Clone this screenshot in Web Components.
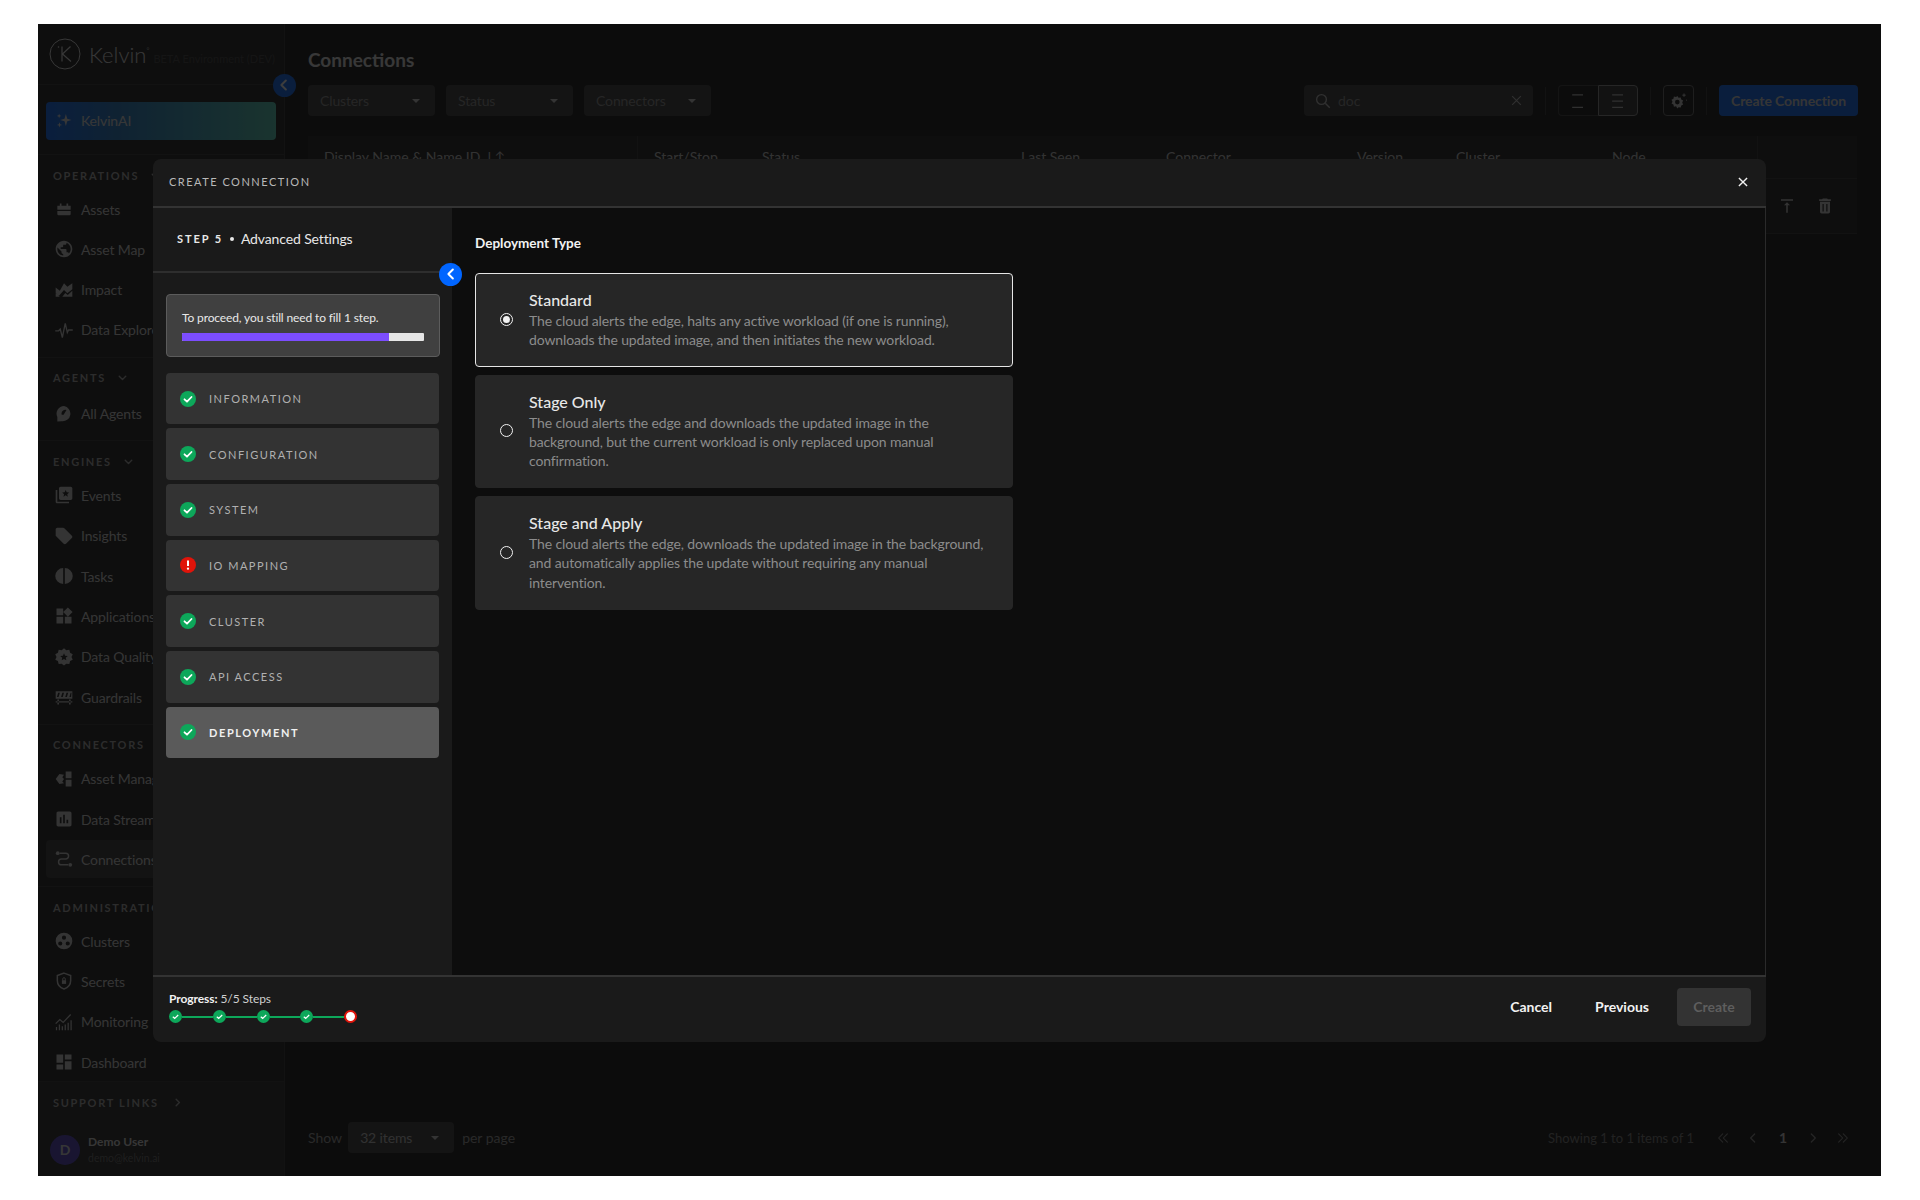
<!DOCTYPE html>
<html lang="en">
<head>
<meta charset="utf-8">
<title>Connections</title>
<style>
    html, body { margin: 0; height: 1200px; background: #fff; overflow: hidden; }
    body { font-family: "Lato", "Liberation Sans", sans-serif; }
</style>
</head>
<body>
<kelvin-app></kelvin-app>
<script>
const ICONS = {
    assets: 'M4 8h3V5.500h2V8h6V5.500h2V8h3v5H4zM4 14.500h16V18a1.500 1.500 0 0 1-1.500 1.500h-13A1.500 1.500 0 0 1 4 18z',
    globe: 'M12 2C6.480 2 2 6.480 2 12s4.480 10 10 10 10-4.480 10-10S17.520 2 12 2zm-1 17.930c-3.950-.490-7-3.850-7-7.930 0-.620.080-1.210.210-1.790L9 15v1c0 1.100.900 2 2 2v1.930zm6.900-2.540c-.260-.810-1-1.390-1.900-1.390h-1v-3c0-.550-.450-1-1-1H8v-2h2c.550 0 1-.450 1-1V7h2c1.100 0 2-.900 2-2v-.410c2.930 1.190 5 4.060 5 7.410 0 2.080-.800 3.970-2.100 5.390z',
    impact: 'M2 9l5 4 5-9 4 4 6-4v7l-6 5-4-4-6 7-4-3zM2 15.500L7 20H2zM22 13v7H10l3.500-4.500 3 2.500z',
    agents: 'M12 2.500a9 9 0 0 0-8 13.100V21l5-.400A9 9 0 1 0 12 2.500zm-3 9a4.500 4.500 0 0 1 6-4.200l-3.500 5.700L9.300 13a4.500 4.500 0 0 1-.300-1.500z',
    events: 'M4 6H2v14c0 1.100.900 2 2 2h14v-2H4zm16-4H8c-1.100 0-2 .900-2 2v12c0 1.100.900 2 2 2h12c1.100 0 2-.900 2-2V4c0-1.100-.900-2-2-2zm-3.400 12L14 12.400 11.400 14l.700-3L9.800 9l3-.300L14 6l1.200 2.700 3 .300-2.300 2z',
    tag: 'M21.410 11.580l-9-9C12.050 2.220 11.550 2 11 2H4c-1.100 0-2 .900-2 2v7c0 .550.220 1.050.590 1.420l9 9c.360.360.860.580 1.410.580.550 0 1.050-.220 1.410-.590l7-7c.370-.360.590-.860.590-1.410 0-.550-.230-1.060-.590-1.420z',
    tasks: 'M11 2.500a9.500 9.500 0 0 0 0 19zM13 2.500a9.500 9.500 0 0 1 0 19z',
    widgets: 'M13 13v8h8v-8h-8zM3 21h8v-8H3v8zM3 3v8h8V3H3zm13.660-1.310L11 7.340 16.660 13l5.660-5.660-5.660-5.650z',
    quality: 'M12 1.500l2.800 2.300 3.600-.400.900 3.500 3.200 1.700-1.500 3.300 1.500 3.300-3.200 1.700-.900 3.500-3.600-.400-2.800 2.300-2.800-2.300-3.600.400-.900-3.500-3.200-1.700 1.500-3.300L1.500 8.600l3.200-1.700.900-3.500 3.600.400zM12 7.500l-1.300 2.900-3.200.300 2.400 2.100-.700 3.100 2.800-1.600 2.800 1.600-.700-3.100 2.400-2.100-3.200-.300z',
    barrier: 'M2 5h20v9H2zM5 7L3.500 12h2L7 7zM10 7l-1.500 5h2L12 7zM15 7l-1.500 5h2L17 7zM20 7l-1.500 5h2L21 7zM4 15h2v6H4zM18 15h2v6h-2zM2 17h20v1.500H2z',
    manager: 'M14 3h7v8h-7zM14 13h7v8h-7zM2 12l4.500-6 5.500 1-2 3 2 2-2 3 2 2-5.500 1z',
    bars: 'M19 3H5c-1.100 0-2 .900-2 2v14c0 1.100.900 2 2 2h14c1.100 0 2-.900 2-2V5c0-1.100-.900-2-2-2zM9 17H7v-7h2v7zm4 0h-2V7h2v10zm4 0h-2v-4h2v4z',
    clusters: 'M12 2a10 10 0 1 0 0 20 10 10 0 0 0 0-20zM12 5.500a2.500 2.500 0 1 1 0 5 2.500 2.500 0 0 1 0-5zM7.500 12.500a2.500 2.500 0 1 1 0 5 2.500 2.500 0 0 1 0-5zM16.500 12.500a2.500 2.500 0 1 1 0 5 2.500 2.500 0 0 1 0-5z',
    dashboard: 'M3 13h8V3H3v10zm0 8h8v-6H3v6zm10 0h8V11h-8v10zm0-18v6h8V3h-8z',
    upload: 'M8 11h3v10h2V11h3l-4-4-4 4zM4 3v2h16V3H4z',
    trash: 'M6 19c0 1.100.900 2 2 2h8c1.100 0 2-.900 2-2V7H6v12zm3-9.500h1.500v9H9zm4.500 0H15v9h-1.500zM19 4h-3.500l-1-1h-5l-1 1H5v2h14V4z'
};

const STROKE_ICONS = {
    pulse: '<path d="M1.500 13h4l2-2 2.500 10 3.500-17 2.500 11 1.500-3h5" fill="none" stroke="currentColor" stroke-width="1.600"/>',
    route: '<circle cx="4.500" cy="5" r="2.300" fill="currentColor"/><circle cx="19.500" cy="19" r="2.300" fill="currentColor"/><path d="M7 5h7a3.500 3.500 0 0 1 0 7H9a3.500 3.500 0 0 0 0 7h8" fill="none" stroke="currentColor" stroke-width="1.800"/>',
    shield: '<path d="M12 2.500l8 3v6c0 5-3.400 8.600-8 10-4.600-1.400-8-5-8-10v-6z" fill="none" stroke="currentColor" stroke-width="1.800"/><path d="M9.500 11h5v4.500h-5z" fill="currentColor"/><path d="M10.500 11V9.500a1.500 1.500 0 0 1 3 0V11" fill="none" stroke="currentColor" stroke-width="1.200"/>',
    monitor: '<path d="M2 14l5-5 4 3.500L20 3" fill="none" stroke="currentColor" stroke-width="1.500"/><path d="M3 22v-4M6.500 22v-7M10 22v-5M13.500 22v-7M17 22v-9M20.500 22v-12" stroke="currentColor" stroke-width="1.500"/>'
};

function iconSvg(name, size) {
    const inner = STROKE_ICONS[name] || `<path d="${ICONS[name]}" fill="currentColor" fill-rule="evenodd"/>`;
    return `<svg viewBox="0 0 24 24" width="${size}" height="${size}" style="display:block;flex:none">${inner}</svg>`;
}

const chevron = (dir, size, color, width = 2.600) => {
    const d = {
        left: 'M14.500 6l-6 6 6 6',
        right: 'M9.500 6l6 6-6 6',
        down: 'M6 9.500l6 6 6-6',
        first: 'M11.500 5l-7 7 7 7M19.500 5l-7 7 7 7',
        last: 'M4.500 5l7 7-7 7M12.500 5l7 7-7 7'
    }[dir];
    return `<svg viewBox="0 0 24 24" width="${size}" height="${size}" style="display:block;flex:none"><path d="${d}" fill="none" stroke="${color}" stroke-width="${width}" stroke-linecap="round" stroke-linejoin="round"/></svg>`;
};

class NavItem extends HTMLElement {
    constructor() {
        super();
        this.attachShadow({ mode: 'open' });
    }

    connectedCallback() {
        const active = this.hasAttribute('active');
        this.shadowRoot.innerHTML = `
            <style>
                :host { display: block; }
                .item {
                    display: flex;
                    align-items: center;
                    gap: 7px;
                    height: 38px;
                    margin: 0 8px;
                    padding: 0 8px;
                    border-radius: 4px;
                    font-size: 14px;
                    letter-spacing: -.13px;
                    color: #d6d6d6;
                    white-space: nowrap;
                    background: ${active ? '#2e2e2e' : 'transparent'};
                }
                .glyph { color: #cfcfcf; }
            </style>
            <div class="item"><span class="glyph">${iconSvg(this.getAttribute('icon'), 20)}</span><slot></slot></div>
        `;
    }
}
customElements.define('nav-item', NavItem);

class NavSection extends HTMLElement {
    constructor() {
        super();
        this.attachShadow({ mode: 'open' });
    }

    connectedCallback() {
        const arrow = this.hasAttribute('open-arrow') ? chevron('down', 13, '#aaa') : '';
        this.shadowRoot.innerHTML = `
            <style>
                :host {
                    display: block;
                    padding: 10px 0 7.700px;
                    border-bottom: 1px solid #2a2a2a;
                }
                :host([last]) { border-bottom: 0; padding-bottom: 0; }
                .label {
                    display: flex;
                    align-items: center;
                    gap: 10px;
                    height: 20px;
                    margin: 0 15px ${this.getAttribute('gap') || 5}px;
                    font-size: 11px;
                    font-weight: 700;
                    letter-spacing: 1.700px;
                    color: #a9a9a9;
                    white-space: nowrap;
                }
                .list { display: flex; flex-direction: column; gap: 2.330px; }
            </style>
            <div class="label">${this.getAttribute('label')}${arrow}</div>
            <div class="list"><slot></slot></div>
        `;
    }
}
customElements.define('nav-section', NavSection);

class AppSidebar extends HTMLElement {
    constructor() {
        super();
        this.attachShadow({ mode: 'open' });
    }

    connectedCallback() {
        this.shadowRoot.innerHTML = `
            <style>
                :host {
                    display: flex;
                    flex-direction: column;
                    flex: none;
                    width: 247px;
                    height: 100%;
                    background: #151515;
                    border-right: 1px solid #2a2a2a;
                    box-sizing: border-box;
                    overflow: hidden;
                }
                .brand {
                    display: flex;
                    align-items: center;
                    gap: 8px;
                    height: 61px;
                    padding-left: 11px;
                    border-bottom: 1px solid #2a2a2a;
                    box-sizing: border-box;
                    flex: none;
                }
                .word { font-size: 22px; font-weight: 300; color: #e2e2e2; }
                .word sup { font-size: 7px; vertical-align: 10px; }
                .beta { font-size: 11px; color: #3a3a3a; margin: 8px 0 0 -4px; white-space: nowrap; }
                .ai-wrap {
                    flex: none;
                    height: 70px;
                    padding: 16.500px 8px 0;
                    box-sizing: border-box;
                    border-bottom: 1px solid #2a2a2a;
                }
                .ai {
                    display: flex;
                    align-items: center;
                    gap: 8px;
                    height: 38px;
                    padding: 0 9px 1px;
                    box-sizing: border-box;
                    border-radius: 4px;
                    font-size: 14px;
                    letter-spacing: -.13px;
                    color: #e2e2e2;
                    background: linear-gradient(90deg, #0065ff 0%, #1c78c8 30%, #4fd0b8 100%);
                }
                .nav { flex: none; }
                .support {
                    flex: none;
                    display: flex;
                    align-items: center;
                    gap: 12px;
                    height: 40px;
                    padding: 1px 0 0 15px;
                    box-sizing: border-box;
                    background: #1e1e1e;
                    border-top: 1px solid #2a2a2a;
                    font-size: 11px;
                    font-weight: 700;
                    letter-spacing: 1.700px;
                    color: #a9a9a9;
                    white-space: nowrap;
                }
                .user {
                    flex: 1;
                    display: flex;
                    align-items: center;
                    gap: 8px;
                    padding: 2px 0 0 12px;
                    background: #1e1e1e;
                }
                .avatar {
                    width: 30px;
                    height: 30px;
                    border-radius: 50%;
                    background: #4b3bc4;
                    color: #ddd;
                    display: flex;
                    align-items: center;
                    justify-content: center;
                    font-size: 14px;
                    font-weight: 700;
                }
                .name { font-size: 12px; font-weight: 700; color: #ddd; line-height: 16px; }
                .mail { font-size: 10.500px; color: #666; line-height: 16px; }
            </style>
            <div class="brand">
                <svg viewBox="0 0 32 32" width="32" height="32" style="flex:none">
                    <circle cx="16" cy="16" r="15" fill="none" stroke="#e2e2e2" stroke-width="1"/>
                    <path d="M13 8.500v15M21.500 8.500L13.500 16l8.500 7.500" fill="none" stroke="#e2e2e2" stroke-width="1.200"/>
                    <circle cx="9.500" cy="9" r=".8" fill="#e2e2e2"/>
                </svg>
                <span class="word">Kelvin<sup>°</sup></span>
                <span class="beta">BETA Environment (DEV)</span>
            </div>
            <div class="ai-wrap">
                <div class="ai">
                    <svg viewBox="0 0 24 24" width="18" height="18" style="flex:none"><path d="M14.500 4l1.800 6.200L22 12l-5.700 1.800L14.500 20l-1.800-6.200L7 12l5.700-1.800zM5.500 3.500l.8 2.200 2.200.8-2.200.8-.8 2.200-.8-2.200L2.500 6.500l2.200-.8zM6 15l.9 2.600 2.600.9-2.600.9L6 22l-.9-2.600-2.600-.9 2.600-.9z" fill="#e2e2e2"/></svg>
                    KelvinAI
                </div>
            </div>
            <div class="nav"><slot></slot></div>
            <div class="support">SUPPORT LINKS ${chevron('right', 13, '#aaa')}</div>
            <div class="user">
                <div class="avatar">D</div>
                <div>
                    <div class="name">Demo User</div>
                    <div class="mail">demo@kelvin.ai</div>
                </div>
            </div>
        `;
    }
}
customElements.define('app-sidebar', AppSidebar);

class FilterSelect extends HTMLElement {
    constructor() {
        super();
        this.attachShadow({ mode: 'open' });
    }

    connectedCallback() {
        this.shadowRoot.innerHTML = `
            <style>
                :host {
                    display: flex;
                    align-items: center;
                    justify-content: space-between;
                    width: ${this.getAttribute('width') || 127}px;
                    height: 31px;
                    padding: 0 15px 0 12px;
                    box-sizing: border-box;
                    background: #333;
                    border-radius: 4px;
                    font-size: 14px;
                    letter-spacing: -.13px;
                    color: ${this.getAttribute('ink') || '#8a8a8a'};
                    flex: none;
                }
                .caret { width: 0; height: 0; border: 4px solid transparent; border-top: 4px solid #cfcfcf; border-bottom: 0; }
            </style>
            <slot></slot><span class="caret"></span>
        `;
    }
}
customElements.define('filter-select', FilterSelect);

class ConnectionsView extends HTMLElement {
    constructor() {
        super();
        this.attachShadow({ mode: 'open' });
    }

    connectedCallback() {
        const heads = ['Display Name &amp; Name ID ↓↑', 'Start/Stop', 'Status', 'Last Seen', 'Connector', 'Version', 'Cluster', 'Node', ''];
        this.shadowRoot.innerHTML = `
            <style>
                :host {
                    display: flex;
                    flex-direction: column;
                    flex: 1;
                    min-width: 0;
                    height: 100%;
                    box-sizing: border-box;
                    padding: 0 23px 23px 23px;
                    background: #0d0d0d;
                }
                h1 {
                    margin: 0;
                    height: 61px;
                    padding-top: 23px;
                    box-sizing: border-box;
                    font-size: 19px;
                    font-weight: 700;
                    line-height: 25px;
                    color: #e4e4e4;
                }
                .toolbar { display: flex; align-items: center; gap: 11px; height: 31px; }
                .right { margin-left: auto; display: flex; align-items: center; gap: 12px; }
                .search {
                    display: flex;
                    align-items: center;
                    gap: 6px;
                    width: 229px;
                    height: 31px;
                    padding: 0 10px;
                    box-sizing: border-box;
                    background: #333;
                    border-radius: 4px;
                    font-size: 14px;
                    color: #8a8a8a;
                }
                .search span { flex: 1; }
                .sep { width: 1px; height: 28px; background: #2a2a2a; }
                .toggle { display: flex; width: 80px; height: 31px; }
                .toggle div {
                    flex: 1;
                    display: flex;
                    align-items: center;
                    justify-content: center;
                    border: 1px solid #333;
                    box-sizing: border-box;
                    color: #bdbdbd;
                }
                .toggle div:first-child { border-radius: 4px 0 0 4px; border-right: 0; }
                .toggle div:last-child { border-radius: 0 4px 4px 0; border-color: #8a8a8a; background: #2a2a2a; }
                .gear {
                    width: 31px;
                    height: 31px;
                    box-sizing: border-box;
                    border: 1px solid #666;
                    border-radius: 4px;
                    display: flex;
                    align-items: center;
                    justify-content: center;
                    color: #cfcfcf;
                }
                .create {
                    width: 139px;
                    height: 31px;
                    border-radius: 4px;
                    background: #0065ff;
                    color: #d8d8d8;
                    font-size: 14px;
                    font-weight: 700;
                    letter-spacing: -.1px;
                    display: flex;
                    align-items: center;
                    justify-content: center;
                }
                .table { margin-top: 20px; width: 1549px; }
                .head, .row {
                    display: grid;
                    grid-template-columns: 330px 108px 259px 145px 191px 99px 156px 161px 100px;
                    background: #181818;
                    border-bottom: 1px solid #2a2a2a;
                }
                .head { height: 42px; }
                .head div {
                    padding: 11px 0 0 16px;
                    font-size: 14px;
                    line-height: 20px;
                    color: #c8c8c8;
                    white-space: nowrap;
                    box-sizing: border-box;
                }
                .head div:first-child { border-right: 1px solid #2a2a2a; }
                .head div:last-child { border-left: 1px solid #2a2a2a; }
                .row { height: 54px; }
                .actions { grid-column: 9; display: flex; align-items: center; gap: 19px; padding-left: 21px; color: #cfcfcf; }
                .pager {
                    margin-top: auto;
                    display: flex;
                    align-items: center;
                    height: 31px;
                    font-size: 14px;
                    color: #9a9a9a;
                }
                .count { margin-left: auto; display: flex; align-items: center; }
                .total { font-size: 13px; color: #7a7a7a; margin-right: 14px; }
                .pg { display: flex; align-items: center; justify-content: center; width: 30px; }
                .pg.one { font-weight: 700; color: #cfcfcf; }
            </style>
            <h1>Connections</h1>
            <div class="toolbar">
                <filter-select>Clusters</filter-select>
                <filter-select>Status</filter-select>
                <filter-select>Connectors</filter-select>
                <div class="right">
                    <div class="search">
                        <svg viewBox="0 0 24 24" width="18" height="18" style="flex:none"><circle cx="10" cy="10" r="6.500" fill="none" stroke="#bdbdbd" stroke-width="1.800"/><path d="M15 15l6 6" stroke="#bdbdbd" stroke-width="1.800"/></svg>
                        <span>doc</span>
                        <svg viewBox="0 0 24 24" width="13" height="13" style="flex:none"><path d="M4 4l16 16M20 4L4 20" stroke="#bdbdbd" stroke-width="2"/></svg>
                    </div>
                    <div class="sep"></div>
                    <div class="toggle">
                        <div><svg viewBox="0 0 24 24" width="20" height="20"><path d="M5 4.500h13M5 19.500h13" stroke="currentColor" stroke-width="1.500"/></svg></div>
                        <div><svg viewBox="0 0 24 24" width="20" height="20"><path d="M5 4.500h13M5 12h13M5 19.500h13" stroke="currentColor" stroke-width="1.500"/></svg></div>
                    </div>
                    <div class="sep"></div>
                    <div class="gear">
                        <svg viewBox="0 0 24 24" width="20" height="20"><path d="M10 6l1.500 2.200 2.600-.5.600 2.600 2.300 1.200-1.200 2.300 1.200 2.300-2.300 1.200-.6 2.600-2.600-.5L10 21l-1.500-2.600-2.600.5-.6-2.600L3 15.100l1.200-2.300L3 10.500l2.300-1.200.6-2.600 2.600.5zM10 10.500a2.800 2.800 0 1 0 0 5.600 2.800 2.800 0 0 0 0-5.600z" fill="currentColor" fill-rule="evenodd"/><path d="M18 3v4M16 5h4M20.500 11h1" stroke="currentColor" stroke-width="1.200"/></svg>
                    </div>
                    <div class="sep"></div>
                    <div class="create">Create Connection</div>
                </div>
            </div>
            <div class="table">
                <div class="head">${heads.map(h => `<div>${h}</div>`).join('')}</div>
                <div class="row"><div class="actions">${iconSvg('upload', 18)}${iconSvg('trash', 20)}</div></div>
            </div>
            <div class="pager">
                <span>Show</span>
                <filter-select width="106" ink="#c4c4c4" style="margin: 0 8px 0 6px">32 items</filter-select>
                <span>per page</span>
                <div class="count">
                    <span class="total">Showing 1 to 1 items of 1</span>
                    <span class="pg">${chevron('first', 14, '#8a8a8a', 1.800)}</span>
                    <span class="pg">${chevron('left', 16, '#8a8a8a', 1.800)}</span>
                    <span class="pg one">1</span>
                    <span class="pg">${chevron('right', 16, '#8a8a8a', 1.800)}</span>
                    <span class="pg">${chevron('last', 14, '#8a8a8a', 1.800)}</span>
                </div>
            </div>
        `;
    }
}
customElements.define('connections-view', ConnectionsView);

class WizardStep extends HTMLElement {
    constructor() {
        super();
        this.attachShadow({ mode: 'open' });
    }

    connectedCallback() {
        const error = this.hasAttribute('error');
        const current = this.hasAttribute('current');
        const mark = error
            ? '<path d="M8 3.500v5.500" stroke="#fff" stroke-width="2"/><circle cx="8" cy="11.700" r="1.150" fill="#fff"/>'
            : '<path d="M4.500 8.300l2.500 2.400 4.500-4.700" fill="none" stroke="#fff" stroke-width="1.800" stroke-linecap="round" stroke-linejoin="round"/>';
        this.shadowRoot.innerHTML = `
            <style>
                :host {
                    display: flex;
                    align-items: center;
                    gap: 13px;
                    height: 51.670px;
                    padding-left: 14px;
                    box-sizing: border-box;
                    border-radius: 4px;
                    background: ${current ? '#5a5a5a' : '#333'};
                    font-size: 11px;
                    font-weight: ${current ? 700 : 400};
                    letter-spacing: ${current ? 1.600 : 1.500}px;
                    color: ${current ? '#f0f0f0' : '#b0b0b0'};
                }
            </style>
            <svg viewBox="0 0 16 16" width="16" height="16"><circle cx="8" cy="8" r="8" fill="${error ? '#e0140a' : '#0da75a'}"/>${mark}</svg>
            <slot></slot>
        `;
    }
}
customElements.define('wizard-step', WizardStep);

class RadioCard extends HTMLElement {
    constructor() {
        super();
        this.attachShadow({ mode: 'open' });
    }

    connectedCallback() {
        const on = this.hasAttribute('checked');
        this.shadowRoot.innerHTML = `
            <style>
                :host {
                    display: flex;
                    align-items: center;
                    gap: 16px;
                    padding: 16px 14px ${on ? 16 : 17}px 24px;
                    box-sizing: border-box;
                    border-radius: 4px;
                    background: #262626;
                    border: 1px solid ${on ? '#e6e6e6' : '#262626'};
                }
                .radio {
                    flex: none;
                    width: 13px;
                    height: 13px;
                    box-sizing: border-box;
                    border-radius: 50%;
                    border: 1.500px solid #f2f2f2;
                    display: flex;
                    align-items: center;
                    justify-content: center;
                }
                .radio i { width: 7px; height: 7px; border-radius: 50%; background: #f2f2f2; }
                .title { font-size: 16px; line-height: 19px; margin-bottom: 2px; font-weight: 500; color: #e8e8e8; }
                .desc { font-size: 14px; line-height: 19.200px; color: #8c8c8c; letter-spacing: -.13px; }
            </style>
            <div class="radio">${on ? '<i></i>' : ''}</div>
            <div>
                <div class="title">${this.getAttribute('title')}</div>
                <div class="desc"><slot></slot></div>
            </div>
        `;
    }
}
customElements.define('radio-card', RadioCard);

class StepDots extends HTMLElement {
    constructor() {
        super();
        this.attachShadow({ mode: 'open' });
    }

    connectedCallback() {
        const done = '<svg viewBox="0 0 13 13" width="13" height="13" style="flex:none"><circle cx="6.500" cy="6.500" r="6.500" fill="#0da75a"/><path d="M3.800 6.800l1.900 1.700 3.500-3.500" fill="none" stroke="#fff" stroke-width="1.200"/></svg>';
        const line = '<span class="line"></span>';
        this.shadowRoot.innerHTML = `
            <style>
                :host { display: flex; align-items: center; width: 188px; height: 14px; }
                .line { flex: 1; height: 2px; background: #0da75a; }
                .last { flex: none; width: 13px; height: 13px; box-sizing: border-box; border-radius: 50%; background: #fff; border: 2px solid #e0140a; }
            </style>
            ${done}${line}${done}${line}${done}${line}${done}${line}<span class="last"></span>
        `;
    }
}
customElements.define('step-dots', StepDots);

class CreateModal extends HTMLElement {
    constructor() {
        super();
        this.attachShadow({ mode: 'open' });
    }

    connectedCallback() {
        this.shadowRoot.innerHTML = `
            <style>
                :host {
                    position: absolute;
                    left: 115px;
                    top: 134.700px;
                    width: 1613px;
                    height: 883.500px;
                    display: flex;
                    flex-direction: column;
                    border-radius: 8px;
                    background: #1a1a1a;
                    overflow: hidden;
                }
                header {
                    flex: none;
                    display: flex;
                    align-items: center;
                    justify-content: space-between;
                    height: 49.500px;
                    padding: 0 16px 1px;
                    box-sizing: border-box;
                    border-bottom: 2px solid #333;
                    font-size: 11px;
                    letter-spacing: 1.500px;
                    color: #b8b8b8;
                }
                .body { flex: 1; display: flex; min-height: 0; }
                aside { position: relative; flex: none; width: 299px; }
                .step {
                    display: flex;
                    align-items: center;
                    height: 64.500px;
                    padding: 0 0 1px 24px;
                    box-sizing: border-box;
                    border-bottom: 2px solid #2e2e2e;
                    font-size: 14px;
                    letter-spacing: -.13px;
                    color: #e8e8e8;
                    white-space: nowrap;
                }
                .step b { font-size: 11px; letter-spacing: 1.900px; font-weight: 700; }
                .step i { width: 4px; height: 4px; border-radius: 50%; background: #e8e8e8; margin: 0 7px; }
                .fold {
                    position: absolute;
                    left: 286px;
                    top: 54.500px;
                    width: 23px;
                    height: 23px;
                    border-radius: 50%;
                    background: #0065ff;
                    display: flex;
                    align-items: center;
                    justify-content: center;
                }
                .panel { padding: 21px 13px 0; display: flex; flex-direction: column; gap: 4px; }
                .notice {
                    height: 63px;
                    margin: 0 -1px 12px 0;
                    padding: 15px 15px 0;
                    box-sizing: border-box;
                    background: #404040;
                    border: 1px solid #5c5c5c;
                    border-radius: 4px;
                    font-size: 12px;
                    letter-spacing: -.13px;
                    line-height: 16px;
                    color: #e8e8e8;
                }
                .bar { display: flex; height: 8px; margin-top: 7px; border-radius: 1px; overflow: hidden; background: #e6e6e6; }
                .bar i { width: 207px; background: #7c4dff; }
                main {
                    flex: 1;
                    padding: 25.500px 16px 0 23px;
                    box-sizing: border-box;
                    background: #0d0d0d;
                    border-right: 1px solid #2a2a2a;
                }
                h2 { margin: 0 0 21.500px; font-size: 13.500px; line-height: 18px; font-weight: 700; color: #f2f2f2; }
                .cards { width: 538px; display: flex; flex-direction: column; gap: 8px; }
                footer {
                    flex: none;
                    display: flex;
                    align-items: center;
                    height: 67px;
                    padding: 0 15px 5px 16px;
                    box-sizing: border-box;
                    border-top: 2px solid #333;
                }
                .prog { font-size: 12px; line-height: 16px; letter-spacing: -.08px; color: #cfcfcf; }
                .prog b { color: #f2f2f2; font-weight: 700; }
                .prog step-dots { margin-top: 3px; }
                .acts { margin-left: auto; display: flex; align-items: center; font-size: 14px; font-weight: 700; color: #f2f2f2; }
                .ghost { margin: 0 43px 2px 0; }
                .ghost + .ghost { margin-right: 28px; }
                .off {
                    width: 74px;
                    height: 38px;
                    padding-bottom: 1px;
                    box-sizing: border-box;
                    border-radius: 4px;
                    background: #333;
                    color: #5e5e5e;
                    display: flex;
                    align-items: center;
                    justify-content: center;
                }
            </style>
            <header>
                <span>CREATE CONNECTION</span>
                <svg viewBox="0 0 24 24" width="14" height="14"><path d="M5 5l14 14M19 5L5 19" stroke="#f0f0f0" stroke-width="2.400"/></svg>
            </header>
            <div class="body">
                <aside>
                    <div class="step"><b>STEP 5</b><i></i>Advanced Settings</div>
                    <div class="fold">${chevron('left', 18, '#fff')}</div>
                    <div class="panel">
                        <div class="notice">
                            To proceed, you still need to fill 1 step.
                            <div class="bar"><i></i></div>
                        </div>
                        <slot name="steps"></slot>
                    </div>
                </aside>
                <main>
                    <h2>Deployment Type</h2>
                    <div class="cards"><slot></slot></div>
                </main>
            </div>
            <footer>
                <div class="prog">
                    <div><b>Progress:</b> 5/5 Steps</div>
                    <step-dots></step-dots>
                </div>
                <div class="acts">
                    <span class="ghost">Cancel</span>
                    <span class="ghost">Previous</span>
                    <span class="off">Create</span>
                </div>
            </footer>
        `;
    }
}
customElements.define('create-modal', CreateModal);

class KelvinApp extends HTMLElement {
    constructor() {
        super();
        this.attachShadow({ mode: 'open' });
    }

    connectedCallback() {
        this.shadowRoot.innerHTML = `
            <style>
                :host {
                    position: relative;
                    display: flex;
                    margin: 24px 39px 0 38px;
                    height: 1152px;
                    overflow: hidden;
                    background: #0d0d0d;
                }
                .dim { position: absolute; inset: 0; background: rgba(13, 13, 13, .8); }
                .fold {
                    position: absolute;
                    left: 234.500px;
                    top: 49.500px;
                    width: 23px;
                    height: 23px;
                    border-radius: 50%;
                    background: #0065ff;
                    display: flex;
                    align-items: center;
                    justify-content: center;
                }
            </style>
            <app-sidebar>
                <nav-section label="OPERATIONS" open-arrow>
                    <nav-item icon="assets">Assets</nav-item>
                    <nav-item icon="globe">Asset Map</nav-item>
                    <nav-item icon="impact">Impact</nav-item>
                    <nav-item icon="pulse">Data Explorer</nav-item>
                </nav-section>
                <nav-section label="AGENTS" open-arrow gap="7">
                    <nav-item icon="agents">All Agents</nav-item>
                </nav-section>
                <nav-section label="ENGINES" open-arrow>
                    <nav-item icon="events">Events</nav-item>
                    <nav-item icon="tag">Insights</nav-item>
                    <nav-item icon="tasks">Tasks</nav-item>
                    <nav-item icon="widgets">Applications</nav-item>
                    <nav-item icon="quality">Data Quality</nav-item>
                    <nav-item icon="barrier">Guardrails</nav-item>
                </nav-section>
                <nav-section label="CONNECTORS" open-arrow>
                    <nav-item icon="manager">Asset Management</nav-item>
                    <nav-item icon="bars">Data Streams</nav-item>
                    <nav-item icon="route" active>Connections</nav-item>
                </nav-section>
                <nav-section label="ADMINISTRATION" open-arrow last>
                    <nav-item icon="clusters">Clusters</nav-item>
                    <nav-item icon="shield">Secrets</nav-item>
                    <nav-item icon="monitor">Monitoring</nav-item>
                    <nav-item icon="dashboard">Dashboard</nav-item>
                </nav-section>
            </app-sidebar>
            <connections-view></connections-view>
            <div class="fold">${chevron('left', 18, '#fff')}</div>
            <div class="dim"></div>
            <slot></slot>
        `;
    }
}
customElements.define('kelvin-app', KelvinApp);

document.querySelector('kelvin-app').innerHTML = `
    <create-modal>
        <wizard-step slot="steps">INFORMATION</wizard-step>
        <wizard-step slot="steps">CONFIGURATION</wizard-step>
        <wizard-step slot="steps">SYSTEM</wizard-step>
        <wizard-step slot="steps" error>IO MAPPING</wizard-step>
        <wizard-step slot="steps">CLUSTER</wizard-step>
        <wizard-step slot="steps">API ACCESS</wizard-step>
        <wizard-step slot="steps" current>DEPLOYMENT</wizard-step>
        <radio-card checked title="Standard">The cloud alerts the edge, halts any active workload (if one is running), downloads the updated image, and then initiates the new workload.</radio-card>
        <radio-card title="Stage Only">The cloud alerts the edge and downloads the updated image in the background, but the current workload is only replaced upon manual confirmation.</radio-card>
        <radio-card title="Stage and Apply">The cloud alerts the edge, downloads the updated image in the background, and automatically applies the update without requiring any manual intervention.</radio-card>
    </create-modal>
`;
</script>
</body>
</html>
